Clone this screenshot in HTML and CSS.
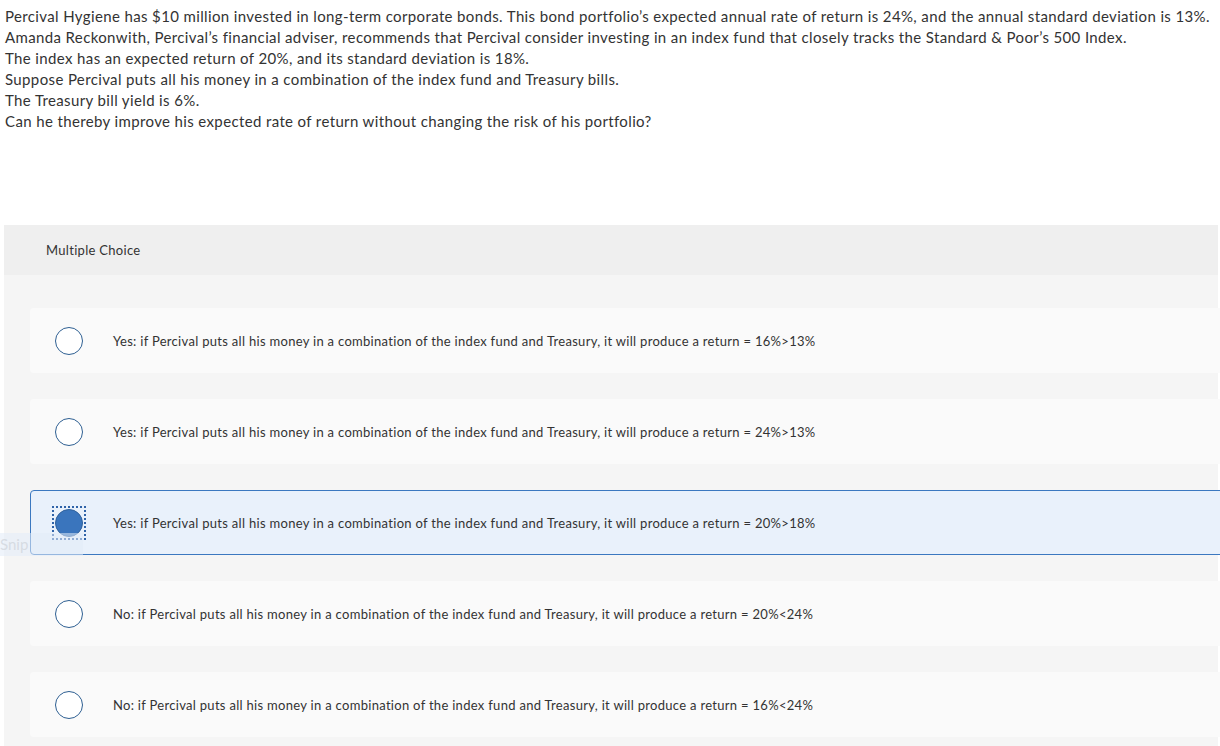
FILE: index.html
```html
<!DOCTYPE html>
<html>
<head>
<meta charset="utf-8">
<link rel="stylesheet" href="styles.css">
</head>
<body>
<div class="question">
  <p>Percival Hygiene has $10 million invested in long-term corporate bonds. This bond portfolio’s expected annual rate of return is 24%, and the annual standard deviation is 13%.</p>
  <p>Amanda Reckonwith, Percival’s financial adviser, recommends that Percival consider investing in an index fund that closely tracks the Standard &amp; Poor’s 500 Index.</p>
  <p>The index has an expected return of 20%, and its standard deviation is 18%.</p>
  <p>Suppose Percival puts all his money in a combination of the index fund and Treasury bills.</p>
  <p>The Treasury bill yield is 6%.</p>
  <p>Can he thereby improve his expected rate of return without changing the risk of his portfolio?</p>
</div>

<section class="mc">
  <div class="mc-head">Multiple Choice</div>
  <div class="mc-body">
    <div class="option">
      <span class="radio"></span>
      <span class="label">Yes: if Percival puts all his money in a combination of the index fund and Treasury, it will produce a return = 16%&gt;13%</span>
    </div>
    <div class="option">
      <span class="radio"></span>
      <span class="label">Yes: if Percival puts all his money in a combination of the index fund and Treasury, it will produce a return = 24%&gt;13%</span>
    </div>
    <div class="option selected">
      <span class="focus"><span class="radio checked"></span></span>
      <span class="label">Yes: if Percival puts all his money in a combination of the index fund and Treasury, it will produce a return = 20%&gt;18%</span>
    </div>
    <div class="option">
      <span class="radio"></span>
      <span class="label">No: if Percival puts all his money in a combination of the index fund and Treasury, it will produce a return = 20%&lt;24%</span>
    </div>
    <div class="option">
      <span class="radio"></span>
      <span class="label">No: if Percival puts all his money in a combination of the index fund and Treasury, it will produce a return = 16%&lt;24%</span>
    </div>
  </div>
</section>

<div class="snip">Snip</div>
</body>
</html>
```

FILE: styles.css
```css
html, body {
  margin: 0;
  padding: 0;
  background: #ffffff;
}

body {
  font-family: "Lato", "Open Sans", "Liberation Sans", sans-serif;
  color: #333333;
  position: relative;
  width: 1220px;
  height: 746px;
  overflow: hidden;
}

.question {
  padding: 6px 0 0 5px;
  font-size: 15px;
  line-height: 21px;
  letter-spacing: 0.37px;
  color: #333333;
}

.question p {
  margin: 0;
  white-space: nowrap;
}

.mc {
  margin: 93px 2px 0 4px;
  background: #f5f5f5;
}

.mc-head {
  height: 50px;
  background: #efefef;
  display: flex;
  align-items: center;
  padding-left: 42px;
  font-size: 13px;
  letter-spacing: 0.3px;
  color: #333333;
}

.mc-body {
  padding: 33px 0 9px 26px;
  display: flex;
  flex-direction: column;
  gap: 26px;
}

.option {
  height: 65px;
  background: #fafafa;
  border-radius: 4px 0 0 4px;
  display: flex;
  align-items: center;
  padding-left: 25px;
  box-sizing: border-box;
  margin-right: -10px;
}

.option.selected {
  background: #e9f1fb;
  border: 1px solid #3b78c0;
  padding-left: 24px;
}

.radio {
  width: 28px;
  height: 28px;
  box-sizing: border-box;
  border: 1.5px solid #2e5f92;
  border-radius: 50%;
  background: #ffffff;
  flex: none;
}

.radio.checked {
  background: #3a75bd;
  border-color: #2f619c;
  display: block;
}

.focus {
  flex: none;
  padding: 1px;
  margin: -3px;
  border: 2px dotted #2f63a8;
  display: block;
}

.label {
  margin-left: 30px;
  font-size: 13px;
  letter-spacing: 0.3px;
  color: #333333;
  white-space: nowrap;
}

.snip {
  position: absolute;
  left: 0;
  top: 533px;
  width: 83px;
  height: 23px;
  background: rgba(225, 235, 248, 0.55);
  color: rgba(200, 205, 212, 0.6);
  font-size: 15px;
  line-height: 23px;
}
```
